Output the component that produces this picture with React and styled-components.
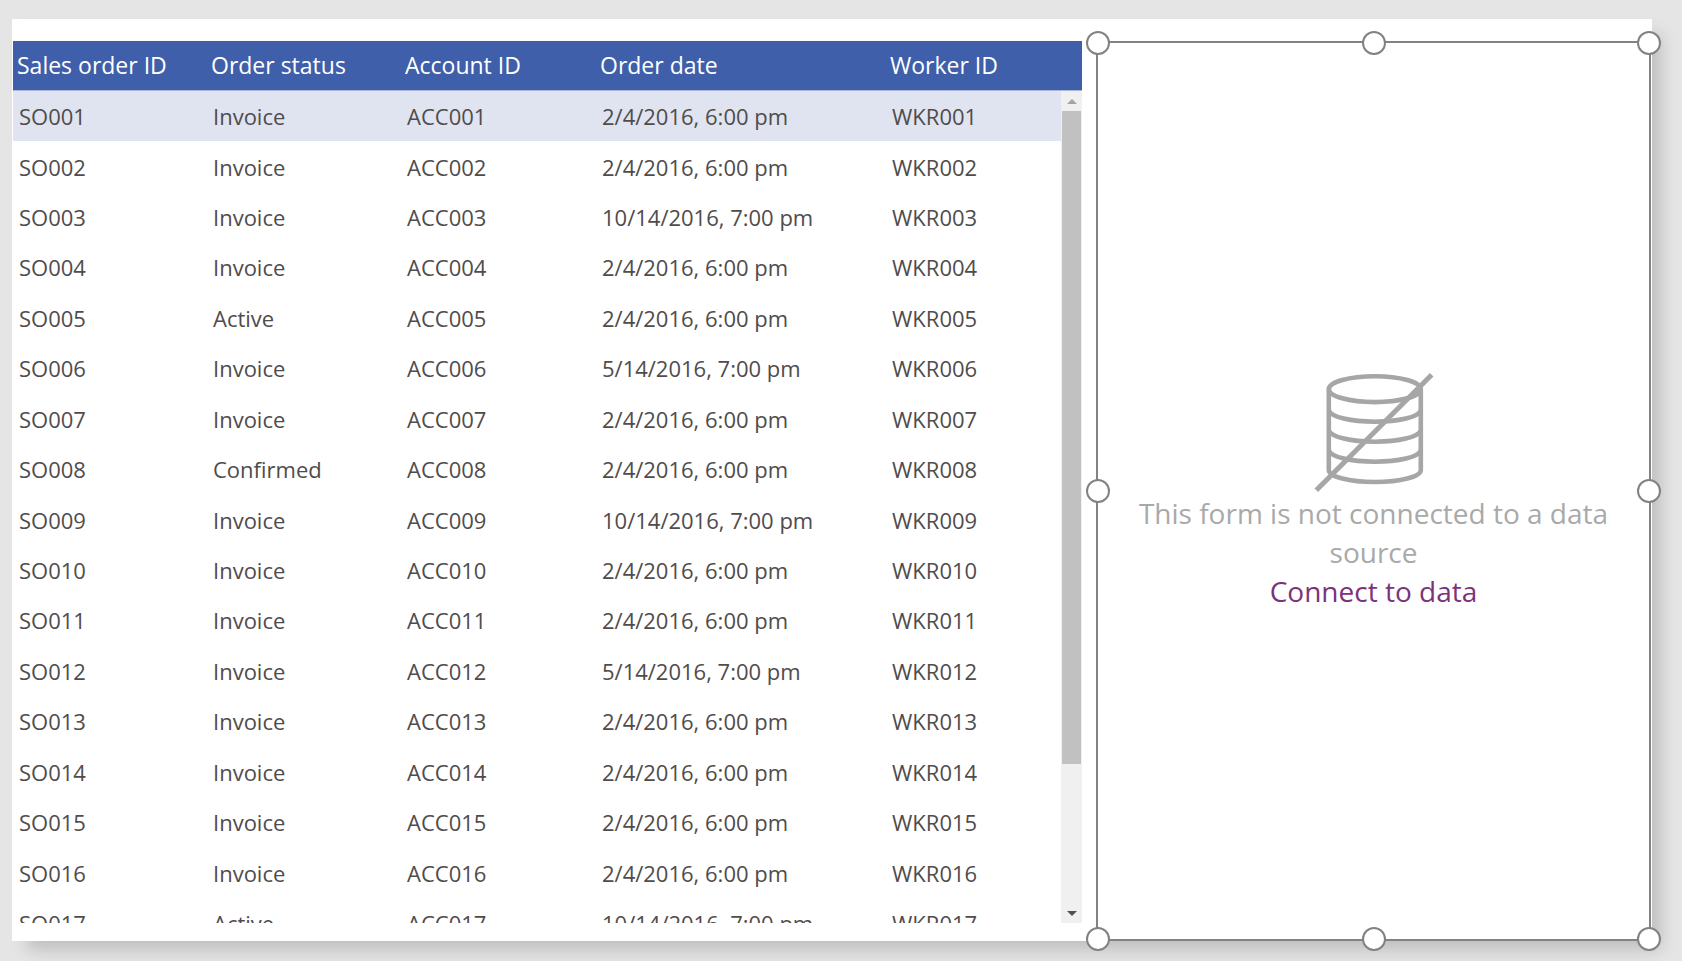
import React from "react";
import styled, { createGlobalStyle } from "styled-components";

const GlobalStyle = createGlobalStyle`
  *, *::before, *::after { box-sizing: border-box; }
  body {
    margin: 0;
    background: #e5e5e5;
    font-family: "Open Sans", "Noto Sans", sans-serif;
  }
`;

const Workspace = styled.div`
  display: flex;
  height: 100vh;
  min-height: 480px;
  padding: 19px 30px 20px 12px;
  overflow: hidden;
`;

const Screen = styled.main`
  flex: 1;
  display: grid;
  grid-template-columns: minmax(0, 1069fr) minmax(0, 555fr);
  column-gap: 14px;
  min-height: 0;
  padding: 22px 1px 0;
  background: #fff;
  box-shadow: 12px 12px 16px -3px rgba(0, 0, 0, 0.17);
`;

const TablePane = styled.section`
  position: relative;
  min-height: 0;
  margin-bottom: 18px;
`;

const DataTable = styled.table`
  display: flex;
  flex-direction: column;
  height: 100%;
  font-size: 22px;
  white-space: nowrap;
`;

const TableHead = styled.thead`
  display: block;
  flex: none;
  height: 50px;
  background: #3f5faa;
  border-bottom: 1px solid #a9b6d8;
  color: #fff;
`;

const TableBody = styled.tbody`
  display: grid;
  flex: 1;
  grid-auto-rows: calc(100% / 16.5);
  min-height: 0;
  overflow: hidden;
  color: #504c4c;
`;

const Row = styled.tr`
  display: grid;
  grid-template-columns: 194fr 194fr 195fr 290fr 196fr;
  align-items: center;
  height: 100%;
  background: ${(p) => (p.$selected ? "#dfe4f0" : "transparent")};
`;

const HeaderCell = styled.th`
  padding: 0 4px 2px;
  font-size: 23px;
  font-weight: 400;
  line-height: 30px;
  text-align: left;
`;

const Cell = styled.td`
  padding: 0 6px;
  line-height: 30px;
`;

const ScrollBar = styled.div`
  position: absolute;
  top: 50px;
  right: 0;
  bottom: 0;
  display: flex;
  flex-direction: column;
  width: 21px;
  background: #f0f0f0;
`;

const ScrollButton = styled.button`
  display: grid;
  place-items: center;
  flex: none;
  width: 100%;
  height: 20px;
  padding: 0;
  border: 0;
  background: transparent;
  color: ${(p) => (p.$dim ? "#a3a3a3" : "#505050")};
`;

const Thumb = styled.div`
  flex: 653;
  margin: 0 1px;
  background: #c1c1c1;
`;

const ThumbRest = styled.div`
  flex: 139;
`;

const FormPane = styled.section`
  position: relative;
  display: flex;
  flex-direction: column;
  align-items: center;
  justify-content: center;
  border: 2px solid #828282;
  padding: 0 32px;
  color: #a9a9a9;
  font-size: 28px;
  line-height: 39px;
  text-align: center;
`;

const Message = styled.p`
  margin: 0;
`;

const ConnectLink = styled.a`
  color: #7c327c;
  text-decoration: none;
`;

const Handle = styled.span`
  position: absolute;
  top: ${(p) => p.$top};
  left: ${(p) => p.$left};
  width: 24px;
  height: 24px;
  margin: -12px 0 0 -12px;
  border: 2px solid #828282;
  border-radius: 50%;
  background: #fff;
`;

const columns = ["Sales order ID", "Order status", "Account ID", "Order date", "Worker ID"];

const FEB = "2/4/2016, 6:00 pm";
const MAY = "5/14/2016, 7:00 pm";
const OCT = "10/14/2016, 7:00 pm";

const orders = [
  ["001", "Invoice", FEB],
  ["002", "Invoice", FEB],
  ["003", "Invoice", OCT],
  ["004", "Invoice", FEB],
  ["005", "Active", FEB],
  ["006", "Invoice", MAY],
  ["007", "Invoice", FEB],
  ["008", "Confirmed", FEB],
  ["009", "Invoice", OCT],
  ["010", "Invoice", FEB],
  ["011", "Invoice", FEB],
  ["012", "Invoice", MAY],
  ["013", "Invoice", FEB],
  ["014", "Invoice", FEB],
  ["015", "Invoice", FEB],
  ["016", "Invoice", FEB],
  ["017", "Active", OCT],
];

const handles = ["0%", "50%", "100%"].flatMap((top) =>
  ["0%", "50%", "100%"]
    .filter((left) => !(top === "50%" && left === "50%"))
    .map((left) => ({ top, left }))
);

function NoDataIcon() {
  return (
    <svg width="120" height="122" viewBox="0 0 120 122" fill="none" stroke="#a6a6a6" strokeWidth="4.6" aria-hidden="true">
      <ellipse cx="60.8" cy="17.2" rx="46" ry="12.9" />
      <path d="M14.8 17.2V98c0 6.8 20.6 12 46 12s46-5.2 46-12V17.2" />
      <path d="M14.8 38.5c2.5 6.6 22 11.2 46 11.2s43.5-4.6 46-11.2" />
      <path d="M14.8 58.5c2.5 6.6 22 11.2 46 11.2s43.5-4.6 46-11.2" />
      <path d="M14.8 78.5c2.5 6.6 22 11.2 46 11.2s43.5-4.6 46-11.2" />
      <path d="M2.3 118.3 117.7 2.7" strokeWidth="5" />
    </svg>
  );
}

export default function App() {
  return (
    <>
      <GlobalStyle />
      <Workspace>
        <Screen>
          <TablePane>
            <DataTable>
              <TableHead>
                <Row>
                  {columns.map((name) => (
                    <HeaderCell key={name} scope="col">{name}</HeaderCell>
                  ))}
                </Row>
              </TableHead>
              <TableBody>
                {orders.map(([id, status, date], i) => (
                  <Row key={id} $selected={i === 0}>
                    <Cell>SO{id}</Cell>
                    <Cell>{status}</Cell>
                    <Cell>ACC{id}</Cell>
                    <Cell>{date}</Cell>
                    <Cell>WKR{id}</Cell>
                  </Row>
                ))}
              </TableBody>
            </DataTable>
            <ScrollBar>
              <ScrollButton type="button" aria-label="Scroll up" $dim>
                <svg width="10" height="5" viewBox="0 0 10 5"><path d="M0 5 5 0l5 5z" fill="currentColor" /></svg>
              </ScrollButton>
              <Thumb />
              <ThumbRest />
              <ScrollButton type="button" aria-label="Scroll down">
                <svg width="10" height="5" viewBox="0 0 10 5"><path d="M0 0l5 5 5-5z" fill="currentColor" /></svg>
              </ScrollButton>
            </ScrollBar>
          </TablePane>
          <FormPane>
            <NoDataIcon />
            <Message>This form is not connected to a data source</Message>
            <ConnectLink href="#connect">Connect to data</ConnectLink>
            {handles.map(({ top, left }) => (
              <Handle key={top + left} $top={top} $left={left} />
            ))}
          </FormPane>
        </Screen>
      </Workspace>
    </>
  );
}
